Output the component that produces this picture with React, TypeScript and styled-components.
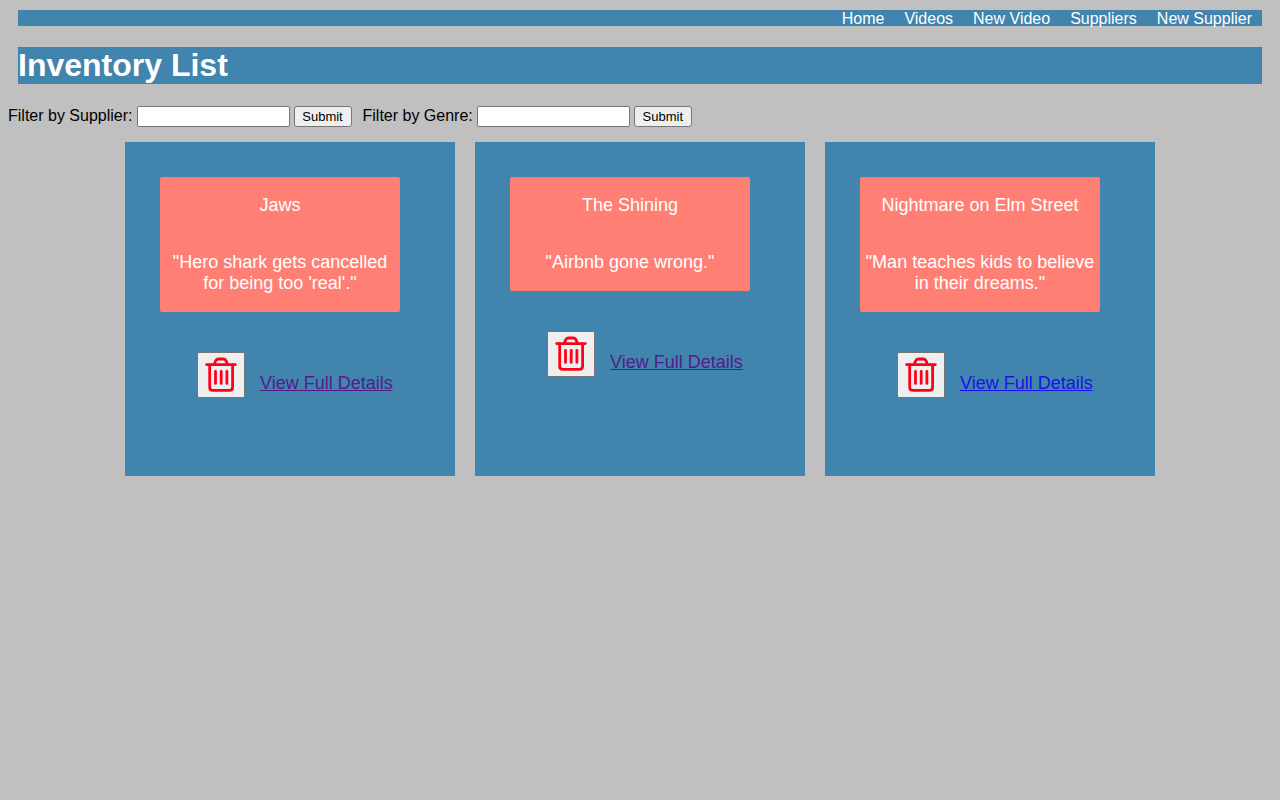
import React, { useId } from 'react';
import styled, { createGlobalStyle } from 'styled-components';

const GlobalStyle = createGlobalStyle`
  body {
    margin: 0;
    padding: 10px 8px;
    background: #c0c0c0;
    color: #000;
    font-family: "Liberation Sans", Arial, Helvetica, sans-serif;
    font-size: 16px;
    line-height: 20px;
  }
`;

const Nav = styled.nav`
  display: flex;
  justify-content: flex-end;
  gap: 20px;
  height: 16px;
  margin: 0 10px;
  padding: 0 10px;
  background: #4184ae;
  line-height: 18px;
`;

const NavLink = styled.a`
  color: #fff;
  text-decoration: none;
`;

const Heading = styled.h1`
  margin: 21px 10px 22px;
  background: #4184ae;
  color: #fff;
  font-size: 32px;
  line-height: 37px;
`;

const Filters = styled.div`
  display: flex;
  flex-wrap: wrap;
  gap: 11px;
`;

const FilterForm = styled.form`
  display: flex;
  align-items: flex-start;
  gap: 4px;
`;

const TextInput = styled.input`
  box-sizing: border-box;
  width: 153px;
  height: 21px;
  padding: 1px 2px;
  border: 1px solid #767676;
  border-radius: 2px;
  background: #fff;
  font: 13px "Liberation Sans", Arial, sans-serif;
`;

const SubmitButton = styled.button`
  box-sizing: border-box;
  width: 58px;
  height: 21px;
  padding: 0;
  border: 1px solid #767676;
  border-radius: 3px;
  background: #efefef;
  color: #000;
  font: 13px "Liberation Sans", Arial, sans-serif;
`;

const CardList = styled.main`
  display: flex;
  flex-wrap: wrap;
  justify-content: center;
  gap: 20px;
  margin-top: 15px;
`;

const Card = styled.article`
  box-sizing: border-box;
  width: 330px;
  padding: 35px 35px 78px;
  background: #4184ae;
  font-size: 18px;
  line-height: 21px;
`;

const Summary = styled.div`
  display: flex;
  flex-direction: column;
  gap: 36px;
  width: 240px;
  padding: 18px 0;
  border-radius: 2px;
  background: #ff7f74;
  color: #fff;
  text-align: center;
`;

const SummaryText = styled.p`
  margin: 0;
`;

const Actions = styled.div`
  display: flex;
  align-items: flex-end;
  gap: 15px;
  margin-top: 40px;
  padding-left: 37px;
`;

const DeleteButton = styled.button`
  box-sizing: border-box;
  display: flex;
  align-items: center;
  justify-content: center;
  width: 48px;
  height: 46px;
  padding: 0;
  border: 1px solid #767676;
  border-radius: 2px;
  background: #efefef;
  color: #ff0019;
`;

const DetailsLink = styled.a<{ $seen: boolean }>`
  padding-bottom: 4px;
  color: ${({ $seen }) => ($seen ? '#551a8b' : '#1a12e8')};
  text-decoration: underline;
`;

function TrashIcon() {
  return (
    <svg
      width="36"
      height="36"
      viewBox="0 0 36 36"
      fill="none"
      stroke="currentColor"
      strokeWidth="2.8"
      strokeLinecap="round"
      strokeLinejoin="round"
      aria-hidden="true"
    >
      <path d="M3.7 7.6H32.3" />
      <path d="M11.2 7.4L12.6 3.9Q13.5 2 15.3 2H20.4Q22.3 2 23.1 3.9L24.5 7.4" />
      <path d="M6.7 8V30.3Q6.7 33.4 9.8 33.4H26.5Q29.6 33.4 29.6 30.3V8" />
      <path d="M12.5 14.4V26.4M18.2 14.4V26.4M23.9 14.4V26.4" />
    </svg>
  );
}

function Filter({ label }: { label: string }) {
  const id = useId();
  return (
    <FilterForm onSubmit={(event) => event.preventDefault()}>
      <label htmlFor={id}>{label}</label>
      <TextInput id={id} type="text" />
      <SubmitButton type="submit">Submit</SubmitButton>
    </FilterForm>
  );
}

const pages = ['Home', 'Videos', 'New Video', 'Suppliers', 'New Supplier'];

const videos = [
  { title: 'Jaws', description: `"Hero shark gets cancelled for being too 'real'."`, seen: true },
  { title: 'The Shining', description: '"Airbnb gone wrong."', seen: true },
  { title: 'Nightmare on Elm Street', description: '"Man teaches kids to believe in their dreams."', seen: false },
];

export default function App() {
  return (
    <>
      <GlobalStyle />
      <Nav>
        {pages.map((page) => (
          <NavLink key={page} href="#">{page}</NavLink>
        ))}
      </Nav>
      <Heading>Inventory List</Heading>
      <Filters>
        <Filter label="Filter by Supplier:" />
        <Filter label="Filter by Genre:" />
      </Filters>
      <CardList>
        {videos.map((video) => (
          <Card key={video.title}>
            <Summary>
              <SummaryText>{video.title}</SummaryText>
              <SummaryText>{video.description}</SummaryText>
            </Summary>
            <Actions>
              <DeleteButton type="button" aria-label="Delete">
                <TrashIcon />
              </DeleteButton>
              <DetailsLink href="#" $seen={video.seen}>View Full Details</DetailsLink>
            </Actions>
          </Card>
        ))}
      </CardList>
    </>
  );
}
